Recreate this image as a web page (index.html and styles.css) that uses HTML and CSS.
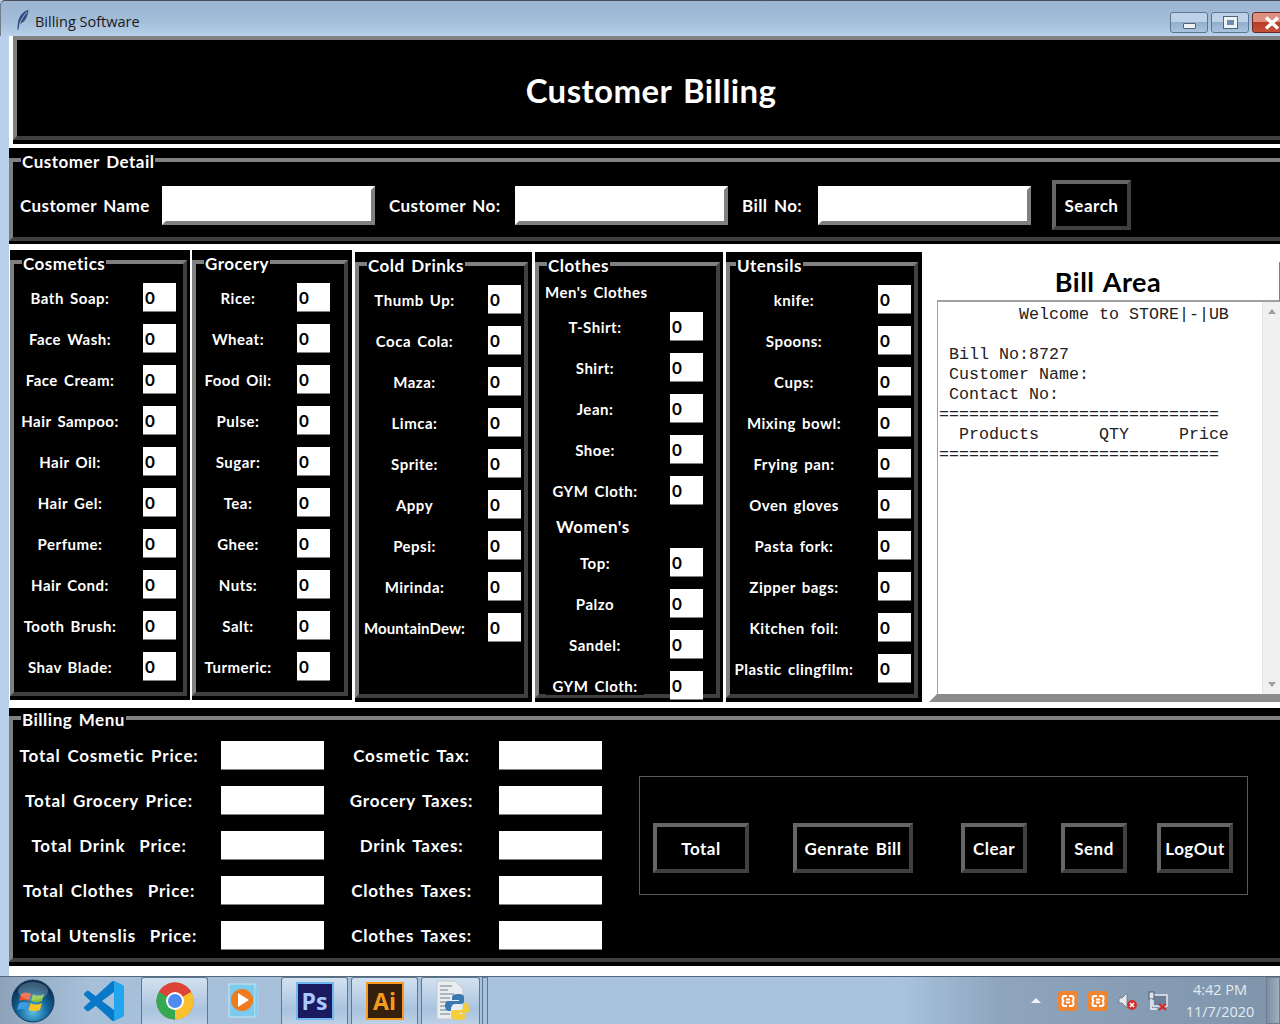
FILE: index.html
```html
<!DOCTYPE html>
<html lang="en">

<head>
<title>Billing Software</title>
<meta charset="UTF-8">
<meta name="viewport" content="width=device-width, initial-scale=1.0">
<link rel="stylesheet" href="styles.css">
</head>

<body>

<div class="titlebar">
  <svg class="feather" width="14" height="22" viewBox="0 0 14 22"><path d="M12.5 .8C7 2.5 2.5 7.5 2 14l-.8 6.6 1.2.2L3.4 15c5-1 8.5-7 9.1-14.200z" fill="#2f4f7f"/><path d="M11 3C8 6 5.500 10 3.800 14.500" stroke="#9db6d2" fill="none"/></svg>
  <span class="titlebar-text">Billing Software</span>
  <div class="winbtns">
    <div class="winbtn"><span class="glyph-min"></span></div>
    <div class="winbtn"><span class="glyph-max"></span></div>
    <div class="winbtn winbtn-close">
      <svg width="16" height="14" viewBox="0 0 16 14"><path d="M2 1.500L14 12.500M14 1.500L2 12.500" stroke="#fff" stroke-width="3.400"/></svg>
    </div>
  </div>
</div>

<div class="window">

  <div class="header"><h1>Customer Billing</h1></div>

  <div class="panel detail">
    <fieldset class="group wide">
      <legend>Customer Detail</legend>
      <div class="detail-row">
        <label>Customer Name</label><input class="entry-big" type="text">
        <label>Customer No:</label><input class="entry-big" type="text">
        <label>Bill No:</label><input class="entry-big" type="text">
        <button class="btn btn-search">Search</button>
      </div>
    </fieldset>
  </div>

  <div class="products">

    <div class="panel product cosmetics">
      <fieldset class="group">
        <legend>Cosmetics</legend>
        <div class="rows">
          <label>Bath Soap:</label><input type="text" value="0">
          <label>Face Wash:</label><input type="text" value="0">
          <label>Face Cream:</label><input type="text" value="0">
          <label>Hair Sampoo:</label><input type="text" value="0">
          <label>Hair Oil:</label><input type="text" value="0">
          <label>Hair Gel:</label><input type="text" value="0">
          <label>Perfume:</label><input type="text" value="0">
          <label>Hair Cond:</label><input type="text" value="0">
          <label>Tooth Brush:</label><input type="text" value="0">
          <label>Shav Blade:</label><input type="text" value="0">
        </div>
      </fieldset>
    </div>

    <div class="panel product grocery">
      <fieldset class="group">
        <legend>Grocery</legend>
        <div class="rows">
          <label>Rice:</label><input type="text" value="0">
          <label>Wheat:</label><input type="text" value="0">
          <label>Food Oil:</label><input type="text" value="0">
          <label>Pulse:</label><input type="text" value="0">
          <label>Sugar:</label><input type="text" value="0">
          <label>Tea:</label><input type="text" value="0">
          <label>Ghee:</label><input type="text" value="0">
          <label>Nuts:</label><input type="text" value="0">
          <label>Salt:</label><input type="text" value="0">
          <label>Turmeric:</label><input type="text" value="0">
        </div>
      </fieldset>
    </div>

    <div class="panel product low drinks">
      <fieldset class="group">
        <legend>Cold Drinks</legend>
        <div class="rows">
          <label>Thumb Up:</label><input type="text" value="0">
          <label>Coca Cola:</label><input type="text" value="0">
          <label>Maza:</label><input type="text" value="0">
          <label>Limca:</label><input type="text" value="0">
          <label>Sprite:</label><input type="text" value="0">
          <label>Appy</label><input type="text" value="0">
          <label>Pepsi:</label><input type="text" value="0">
          <label>Mirinda:</label><input type="text" value="0">
          <label class="narrow">MountainDew:</label><input type="text" value="0">
        </div>
      </fieldset>
    </div>

    <div class="panel product low clothes">
      <fieldset class="group">
        <legend>Clothes</legend>
        <div class="sub-title mens">Men's Clothes</div>
        <div class="rows rows-tight">
          <label>T-Shirt:</label><input type="text" value="0">
          <label>Shirt:</label><input type="text" value="0">
          <label>Jean:</label><input type="text" value="0">
          <label>Shoe:</label><input type="text" value="0">
          <label>GYM Cloth:</label><input type="text" value="0">
        </div>
        <div class="sub-title womens">Women's</div>
        <div class="rows rows-tight">
          <label>Top:</label><input type="text" value="0">
          <label>Palzo</label><input type="text" value="0">
          <label>Sandel:</label><input type="text" value="0">
          <label class="on-border">GYM Cloth:</label><input type="text" value="0">
        </div>
      </fieldset>
    </div>

    <div class="panel product low utensils">
      <fieldset class="group">
        <legend>Utensils</legend>
        <div class="rows">
          <label>knife:</label><input type="text" value="0">
          <label>Spoons:</label><input type="text" value="0">
          <label>Cups:</label><input type="text" value="0">
          <label>Mixing bowl:</label><input type="text" value="0">
          <label>Frying pan:</label><input type="text" value="0">
          <label>Oven gloves</label><input type="text" value="0">
          <label>Pasta fork:</label><input type="text" value="0">
          <label>Zipper bags:</label><input type="text" value="0">
          <label>Kitchen foil:</label><input type="text" value="0">
          <label>Plastic clingfilm:</label><input type="text" value="0">
        </div>
      </fieldset>
    </div>

    <div class="bill">
      <div class="bill-title">Bill Area</div>
      <div class="bill-body">
<pre class="bill-text">        Welcome to STORE|-|UB

 Bill No:8727
 Customer Name:
 Contact No:
============================
  Products      QTY     Price
============================</pre>
        <div class="scrollbar"><span class="arrow-up"></span><span class="arrow-down"></span></div>
      </div>
    </div>

  </div>

  <div class="panel menu">
    <fieldset class="group wide">
      <legend>Billing Menu</legend>
      <div class="menu-body">
        <div class="totals">
          <label class="col1">Total Cosmetic Price:</label><input type="text"><label>Cosmetic Tax:</label><input type="text">
          <label class="col1">Total Grocery Price:</label><input type="text"><label>Grocery Taxes:</label><input type="text">
          <label class="col1">Total Drink &nbsp;Price:</label><input type="text"><label>Drink Taxes:</label><input type="text">
          <label class="col1">Total Clothes &nbsp;Price:</label><input type="text"><label>Clothes Taxes:</label><input type="text">
          <label class="col1">Total Utenslis &nbsp;Price:</label><input type="text"><label>Clothes Taxes:</label><input type="text">
        </div>
        <div class="actions">
          <button class="btn btn-total">Total</button>
          <button class="btn btn-bill">Genrate Bill</button>
          <button class="btn btn-clear">Clear</button>
          <button class="btn btn-send">Send</button>
          <button class="btn btn-logout">LogOut</button>
        </div>
      </div>
    </fieldset>
  </div>

</div>

<div class="taskbar">
  <div class="start">
    <svg width="44" height="44" viewBox="0 0 44 44">
      <defs><radialGradient id="orb" cx="50%" cy="75%" r="65%"><stop offset="0" stop-color="#5cc2e8"/><stop offset=".55" stop-color="#13659a"/><stop offset="1" stop-color="#0a2f52"/></radialGradient></defs>
      <circle cx="22" cy="22" r="21" fill="url(#orb)" stroke="#16395a"/>
      <path d="M10 15c3-2 6-2 10 0l-2 7c-3-1.500-6-1.500-10 0z" fill="#e8522c"/>
      <path d="M22 15c3 2 7 2 11 0l-2 7c-3 1.500-7 1.500-11 0z" fill="#86c33a"/>
      <path d="M8 24c3-1.500 6-1.500 9.500 0l-2 7c-3-1.500-6-1.500-9.500 0z" fill="#3d9be0"/>
      <path d="M19.500 24c4 2 7.500 2 11.500 0l-2 7c-3 1.500-7 1.500-11.500 0z" fill="#f6c225"/>
      <ellipse cx="22" cy="12" rx="15" ry="9" fill="#fff" opacity=".22"/>
    </svg>
  </div>
  <div class="task task-plain task-code">
    <svg width="40" height="40" viewBox="0 0 24 24"><path d="M23.150 2.587L18.210.21a1.494 1.494 0 0 0-1.705.29l-9.460 8.630-4.120-3.128a.999.999 0 0 0-1.276.057L.327 7.261A1 1 0 0 0 .326 8.740L3.899 12 .326 15.260a1 1 0 0 0 .001 1.479L1.650 17.940a.999.999 0 0 0 1.276.057l4.120-3.128 9.460 8.630a1.492 1.492 0 0 0 1.704.29l4.942-2.377A1.500 1.500 0 0 0 24 20.060V3.939a1.500 1.500 0 0 0-.85-1.352zm-5.146 14.861L10.826 12l7.178-5.448v10.896z" fill="#0a78c8"/><path d="M18 .1c.1 0 .200.05.21.11l4.940 2.377A1.500 1.500 0 0 1 24 3.939V20.060a1.500 1.500 0 0 1-.85 1.352L18.210 23.790c-.07.03-.14.06-.21.08z" fill="#23a6f0"/></svg>
  </div>
  <div class="task task-chrome">
    <svg width="38" height="38" viewBox="0 0 38 38">
      <circle cx="19" cy="19" r="18.500" fill="#db4437"/>
      <path d="M19 19L35 9.700A18.500 18.500 0 0 1 19 37.500z" fill="#fbc02d"/>
      <path d="M19 19L19 37.500A18.500 18.500 0 0 1 3 9.700z" fill="#34a853"/>
      <path d="M19 19L3 9.700A18.500 18.500 0 0 1 35 9.700z" fill="#db4437"/>
      <circle cx="19" cy="19" r="9" fill="#fff"/>
      <circle cx="19" cy="19" r="7" fill="#4d8bf0"/>
    </svg>
  </div>
  <div class="task task-plain task-media">
    <svg width="36" height="38" viewBox="0 0 36 38">
      <path d="M6 4h24v30H6z" fill="#58b7e4" stroke="#a9dcf4"/>
      <path d="M2 2h26v33H2z" fill="#7ccbec" stroke="#c6e9f8"/>
      <circle cx="15" cy="18" r="11" fill="#f07a1c"/>
      <path d="M11 11l11 7-11 7z" fill="#fff"/>
    </svg>
  </div>
  <div class="task task-ps">
    <div class="app-tile tile-ps">Ps</div>
  </div>
  <div class="task task-ai">
    <div class="app-tile tile-ai">Ai</div>
  </div>
  <div class="task task-py">
    <svg width="40" height="42" viewBox="0 0 40 42">
      <path d="M6 1h18l8 8v30H6z" fill="#e8edf2" stroke="#c3c9cf"/>
      <path d="M9 6h12M9 10h8M9 14h14M9 18h10M9 22h8M9 26h12M9 30h7M9 34h10" stroke="#9aa3ab" stroke-width="1.500"/>
      <path d="M28 14c-5 0-7 1-7 3.500V20h7v1H18c-3 0-4 2-4 5s1.500 5 4 5h2v-3c0-2 2-4 4-4h6c2 0 3-1 3-3v-4c0-2-2-3-5-3z" fill="#3a78b0"/>
      <path d="M28 40c5 0 7-1 7-3.500V34h-7v-1h10c-1 0 0-2 0-5s-1-5-3-5h-2v3c0 2-2 4-4 4h-6c-2 0-3 1-3 3v4c0 2 3 3 8 3z" fill="#f5cd3c"/>
    </svg>
  </div>
  <div class="task task-sliver"></div>

  <div class="tray">
    <span class="tray-arrow"></span>
    <svg class="tray-icon" width="20" height="20" viewBox="0 0 20 20"><rect width="20" height="20" rx="3" fill="#ef8431"/><path d="M9 5H6.500a2 2 0 0 0-2 2v1a2 2 0 0 0 1.500 2 2 2 0 0 0-1.500 2v1a2 2 0 0 0 2 2H9M11 5h2.500a2 2 0 0 1 2 2v1a2 2 0 0 1-1.500 2 2 2 0 0 1 1.500 2v1a2 2 0 0 1-2 2H11M8 8.500h4M8 11.500h4" fill="none" stroke="#fff" stroke-width="2"/></svg>
    <svg class="tray-icon" width="20" height="20" viewBox="0 0 20 20"><rect width="20" height="20" rx="3" fill="#ef8431"/><path d="M9 5H6.500a2 2 0 0 0-2 2v1a2 2 0 0 0 1.500 2 2 2 0 0 0-1.500 2v1a2 2 0 0 0 2 2H9M11 5h2.500a2 2 0 0 1 2 2v1a2 2 0 0 1-1.500 2 2 2 0 0 1 1.500 2v1a2 2 0 0 1-2 2H11M8 8.500h4M8 11.500h4" fill="none" stroke="#fff" stroke-width="2"/></svg>
    <svg class="tray-icon" width="20" height="20" viewBox="0 0 20 20"><path d="M1 7h3l5-5v15l-5-5H1z" fill="#e6e9ec" stroke="#596b7c" stroke-width=".7"/><circle cx="14" cy="14" r="5" fill="#d3312b"/><path d="M12 12l4 4M16 12l-4 4" stroke="#fff" stroke-width="1.500"/></svg>
    <svg class="tray-icon" width="20" height="20" viewBox="0 0 20 20"><rect x="5" y="4" width="14" height="11" fill="#6c8199" stroke="#f0f3f6" stroke-width="1.400"/><rect x="1" y="1" width="5" height="7" fill="#dfe4e8" stroke="#4a5a69"/><path d="M3 8v10h6" stroke="#f0f3f6" fill="none" stroke-width="1.500"/><path d="M11 13l7 6M18 13l-7 6" stroke="#e0201c" stroke-width="2"/></svg>
  </div>
  <div class="clock"><span>4:42 PM</span><span>11/7/2020</span></div>
  <div class="show-desktop"></div>
</div>

</body>
</html>
```

FILE: styles.css
```css
* {
    box-sizing: border-box;
}
html, body {
    margin: 0;
    height: 1024px;
    overflow: hidden;
}
body {
    display: flex;
    flex-direction: column;
    width: 1280px;
    font-family: "Lato", "Open Sans", sans-serif;
    font-weight: 700;
    font-size: 16px;
    color: #fff;
    background: #b9d1ea;
}

/* title bar */
.titlebar {
    display: flex;
    align-items: center;
    height: 36px;
    flex: none;
    padding: 6px 0 0 15px;
    border-top: 1px solid #4a4f55;
    border-left: 1px solid #6f7c8a;
    border-top-left-radius: 5px;
    background: linear-gradient(#9ab4d1, #a4bdd9 60%, #b9d1ea);
    font-family: "Open Sans", sans-serif;
    font-weight: 400;
    font-size: 14.5px;
    color: #1a1a1a;
}
.feather {
    flex: none;
    margin-top: -4px;
}
.titlebar-text {
    margin-left: 5px;
}
.winbtns {
    display: flex;
    gap: 3px;
    margin-left: auto;
    align-self: flex-start;
    margin-top: 5px;
    margin-right: -10px;
}
.winbtn {
    display: flex;
    align-items: center;
    justify-content: center;
    width: 38px;
    height: 21px;
    border: 1px solid #5d7690;
    border-radius: 3px;
    background: linear-gradient(#bdd2e8 50%, #93afcc 50%, #a9c3de);
}
.winbtn-close {
    border-color: #6d2a25;
    background: linear-gradient(#dd8f80 45%, #b93a24 45%, #c4503a);
    justify-content: flex-start;
    padding-left: 11px;
}
.glyph-min {
    width: 13px;
    height: 6px;
    margin-top: 7px;
    background: #eef2f6;
    border: 1px solid #50647a;
    border-radius: 1px;
}
.glyph-max {
    width: 13px;
    height: 11px;
    border: 3px solid #eef2f6;
    outline: 1px solid #50647a;
    background: #6f8bb0;
}

/* main window */
.window {
    flex: none;
    height: 940px;
    margin-left: 9px;
    background: #fff;
    overflow: hidden;
}
.header {
    display: flex;
    align-items: center;
    justify-content: center;
    height: 104px;
    margin: 0 0 8px 4px;
    padding: 4px 0 0 5px;
    border: 4px solid #808080;
    border-right: 0;
    border-bottom-color: #404040;
    box-shadow: 0 4px 0 #000;
    background: #000;
}
.header h1 {
    margin: 0;
    font-size: 33px;
    font-weight: 700;
    letter-spacing: .4px;
    word-spacing: 3px;
}
.panel {
    background: #000;
}
.group {
    margin: 0 4px 0 0;
    padding: 0;
    min-width: 0;
    border: 4px solid #808080;
    border-right-color: #404040;
    border-bottom-color: #404040;
}
.group legend {
    margin-left: 8px;
    padding: 0 1px;
    height: 20px;
    line-height: 24px;
    font-size: 17px;
    letter-spacing: .5px;
    word-spacing: 2px;
}
.group.wide {
    margin-right: 0;
    border-right: 0;
}
label {
    font-size: 15px;
    letter-spacing: .5px;
    word-spacing: 2px;
    white-space: nowrap;
}
input {
    display: block;
    border: 0;
    border-radius: 0;
    outline: none;
    background: #fff;
    font-family: inherit;
    font-weight: 700;
    font-size: 17px;
    color: #000;
}

/* customer detail */
.detail {
    height: 96px;
    padding-top: 2px;
}
.detail .group {
    height: 91px;
}
.detail-row {
    display: grid;
    grid-template-columns: 142px 227px 126px 227px 76px 234px 79px;
    align-items: center;
    height: 50px;
    margin-top: 10px;
    padding-left: 7px;
}
.detail-row label {
    font-size: 17px;
    letter-spacing: .4px;
}
.entry-big {
    width: 213px;
    height: 39px;
    border: solid 4px;
    border-color: #fff #808080 #808080 #fff;
}
.btn {
    height: 50px;
    padding: 0;
    border: 4px solid #666;
    border-right-color: #404040;
    border-bottom-color: #404040;
    background: #000;
    color: #fff;
    font-family: inherit;
    font-weight: 700;
    font-size: 17px;
    letter-spacing: .5px;
    word-spacing: 2px;
}
.btn-search {
    width: 79px;
}

/* product columns */
.products {
    display: flex;
    align-items: flex-start;
    height: 458px;
    margin-top: 6px;
}
.product {
    height: 450px;
    padding-top: 2px;
}
.product .group {
    height: 444px;
}
.product.low {
    margin-top: 2px;
}
.cosmetics {
    width: 180px;
    margin-left: 1px;
}
.cosmetics .group {
    margin-right: 3px;
}
.grocery {
    width: 160px;
    margin-left: 2px;
}
.drinks {
    width: 177px;
    margin-left: 3px;
}
.clothes {
    width: 188px;
    margin-left: 3px;
}
.clothes .group {
    margin-right: 3px;
}
.utensils {
    width: 196px;
    margin-left: 3px;
}
.utensils legend {
    margin-left: 6px;
}
.rows {
    display: grid;
    grid-auto-rows: 30px;
    row-gap: 11px;
    align-items: center;
    padding-top: 11px;
}
.rows label {
    text-align: center;
}
.rows .narrow {
    letter-spacing: .1px;
}
.rows input {
    align-self: start;
    width: 33px;
    height: 29px;
    padding: 0 0 0 2px;
    border-bottom: 1px solid #808080;
}
.cosmetics .rows {
    grid-template-columns: 112px 34px;
    column-gap: 17px;
}
.grocery .rows {
    grid-template-columns: 84px 34px;
    column-gap: 17px;
}
.drinks .rows {
    grid-template-columns: 111px 34px;
    column-gap: 18px;
}
.clothes .rows {
    grid-template-columns: 112px 34px;
    column-gap: 19px;
}
.utensils .rows {
    grid-template-columns: 128px 34px;
    column-gap: 20px;
}
.rows-tight {
    padding-top: 0;
}
.sub-title {
    font-size: 15px;
    letter-spacing: .5px;
    word-spacing: 2px;
}
.mens {
    height: 38px;
    padding: 9px 0 0 6px;
}
.womens {
    height: 42px;
    padding: 10px 0 0 17px;
    font-size: 17px;
}
.on-border {
    position: relative;
    justify-self: center;
    padding: 0 6px;
    background: #000;
}

/* bill area */
.bill {
    display: flex;
    flex-direction: column;
    width: 351px;
    height: 440px;
    margin: 12px 0 0 7px;
    border-left: 8px solid #fff;
    border-bottom: 8px solid #8c8c8c;
    color: #000;
}
.bill-title {
    flex: none;
    height: 40px;
    padding-top: 2px;
    border-right: 1px solid #808080;
    border-bottom: 2px solid #a0a0a0;
    text-align: center;
    font-size: 27px;
    line-height: 36px;
    letter-spacing: .5px;
    word-spacing: 2px;
}
.bill-body {
    display: flex;
    flex: 1;
    min-height: 0;
    border-left: 1px solid #a0a0a0;
}
.bill-text {
    flex: 1;
    margin: 0;
    padding: 3px 0 0 1px;
    font-family: "Liberation Mono", monospace;
    font-weight: 400;
    font-size: 16.67px;
    line-height: 20px;
    color: #222;
}
.scrollbar {
    display: flex;
    flex: none;
    flex-direction: column;
    align-items: center;
    justify-content: space-between;
    width: 18px;
    padding: 7px 0 7px;
    border-left: 1px solid #e4e4e4;
    background: #f0f0f0;
}
.arrow-up, .arrow-down {
    width: 0;
    height: 0;
    border: 4px solid transparent;
}
.arrow-up {
    border-top: 0;
    border-bottom: 5px solid #a0a0a0;
}
.arrow-down {
    border-bottom: 0;
    border-top: 5px solid #a0a0a0;
}

/* billing menu */
.menu {
    height: 258px;
}
.menu .group {
    height: 254px;
}
.menu-body {
    display: flex;
    align-items: flex-start;
}
.totals {
    display: grid;
    grid-template-columns: 208px 103px 175px 103px;
    grid-auto-rows: 29px;
    row-gap: 16px;
    align-items: center;
    padding-top: 13px;
}
.totals label {
    text-align: center;
    font-size: 17px;
    letter-spacing: .8px;
}
.totals .col1 {
    padding-right: 16px;
}
.totals input {
    width: 103px;
    height: 29px;
    border-bottom: 1px solid #808080;
}
.actions {
    display: flex;
    align-items: flex-start;
    width: 609px;
    height: 119px;
    margin: 48px 0 0 37px;
    padding: 46px 0 0 13px;
    border: 1px solid #5a5a5a;
}
.btn-total {
    width: 96px;
    margin-right: 44px;
}
.btn-bill {
    width: 120px;
    margin-right: 48px;
}
.btn-clear {
    width: 66px;
    margin-right: 34px;
}
.btn-send {
    width: 66px;
    margin-right: 30px;
}
.btn-logout {
    width: 76px;
}

/* taskbar */
.taskbar {
    display: flex;
    flex: none;
    align-items: stretch;
    height: 48px;
    border-top: 1px solid #54687c;
    background: linear-gradient(90deg, #8ea3ba 0, #a7c0da 90px, #a9c3de 900px, #8ea5bd 1000px, #7d94ab 1280px);
    font-weight: 400;
}
.start {
    display: flex;
    align-items: center;
    justify-content: center;
    width: 66px;
    flex: none;
}
.task {
    display: flex;
    align-items: center;
    justify-content: center;
    flex: none;
    height: 47px;
}
.task-plain {
    background: none;
}
.task-code {
    width: 75px;
}
.task-chrome, .task-ps, .task-ai, .task-py {
    border: 1px solid #5f7790;
    border-bottom: 0;
    border-radius: 3px 3px 0 0;
    background: linear-gradient(#d3e1ef, #a9c3de 70%, #bcd0e5);
}
.task-chrome {
    width: 67px;
}
.task-media {
    width: 73px;
}
.task-ps {
    width: 67px;
}
.task-ai {
    width: 67px;
    margin-left: 3px;
}
.task-py {
    width: 59px;
    margin-left: 3px;
}
.task-sliver {
    width: 6px;
    margin-left: 2px;
    border: 1px solid #5f7790;
    border-bottom: 0;
}
.app-tile {
    width: 38px;
    height: 38px;
    padding-top: 3px;
    font-family: "Open Sans", sans-serif;
    font-weight: 700;
    font-size: 23px;
    line-height: 28px;
    text-align: center;
}
.tile-ps {
    border: 2px solid #6fb7f0;
    background: #1a1a60;
    color: #a9c8ff;
}
.tile-ai {
    border: 2px solid #f59a1e;
    background: #35200e;
    color: #f59a1e;
}
.tray {
    display: flex;
    align-items: center;
    gap: 10px;
    margin-left: auto;
}
.tray-arrow {
    width: 0;
    height: 0;
    margin-right: 7px;
    border: 5px solid transparent;
    border-top: 0;
    border-bottom: 5px solid #f2f4f6;
}
.clock {
    display: flex;
    flex-direction: column;
    align-items: center;
    justify-content: center;
    gap: 4px;
    width: 86px;
    margin-left: 9px;
    margin-right: 3px;
    font-family: "Open Sans", sans-serif;
    font-size: 14.5px;
    line-height: 18px;
    color: #e4eaf0;
}
.show-desktop {
    width: 14px;
    flex: none;
    border: 1px solid #6b7f93;
    background: linear-gradient(90deg, #7c8ea0, #9fb0c0);
}
```
